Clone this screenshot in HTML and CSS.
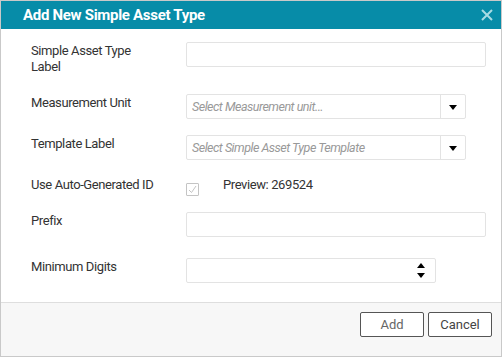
FILE: index.html
```html
<!DOCTYPE html>
<html lang="en">
<head>
    <meta charset="UTF-8">
    <meta name="viewport" content="width=device-width, initial-scale=1.0">
    <title>Add New Simple Asset Type</title>
    <link rel="stylesheet" href="styles.css">
</head>
<body>

<div class="dialog">
    <div class="dialog-header">
        <h1>Add New Simple Asset Type</h1>
        <button class="close" title="Close">
            <svg width="12" height="12" viewBox="0 0 12 12"><path d="M1 1L11 11M11 1L1 11" stroke="currentColor" stroke-width="2"/></svg>
        </button>
    </div>

    <div class="dialog-body">
        <div class="row row-tall">
            <label>Simple Asset Type<br>Label</label>
            <input type="text" class="field">
        </div>
        <div class="row">
            <label>Measurement Unit</label>
            <div class="select">
                <span class="placeholder">Select Measurement unit...</span>
                <span class="select-btn"><span class="caret"></span></span>
            </div>
        </div>
        <div class="row">
            <label>Template Label</label>
            <div class="select">
                <span class="placeholder">Select Simple Asset Type Template</span>
                <span class="select-btn"><span class="caret"></span></span>
            </div>
        </div>
        <div class="row">
            <label>Use Auto-Generated ID</label>
            <div class="auto-id">
                <span class="checkbox">
                    <svg width="11" height="11" viewBox="0 0 11 11"><path d="M2 6L4.5 8.5L9 2" fill="none" stroke="#c4c4c4" stroke-width="1"/></svg>
                </span>
                <span class="preview">Preview: 269524</span>
            </div>
        </div>
        <div class="row row-mid">
            <label>Prefix</label>
            <input type="text" class="field">
        </div>
        <div class="row">
            <label>Minimum Digits</label>
            <div class="number">
                <span class="spin">
                    <span class="up"></span>
                    <span class="down"></span>
                </span>
            </div>
        </div>
    </div>

    <div class="dialog-footer">
        <button class="btn">Add</button>
        <button class="btn btn-dark">Cancel</button>
    </div>
</div>

</body>
</html>
```

FILE: styles.css
```css
body {
    margin: 0;
    font-family: Roboto, "Liberation Sans", sans-serif;
    font-size: 13px;
    letter-spacing: -0.4px;
    color: #333;
}
.dialog {
    width: 502px;
    height: 357px;
    box-sizing: border-box;
    border: 1px solid #c9c9c9;
    display: flex;
    flex-direction: column;
    background: #fff;
}
.dialog-header {
    height: 28px;
    background-color: #078ca8;
    display: flex;
    align-items: center;
    justify-content: space-between;
    padding: 0 8px 0 22px;
}
.dialog-header h1 {
    margin: 0;
    font-size: 15px;
    letter-spacing: -0.3px;
    font-weight: bold;
    color: #fff;
}
.close {
    border: none;
    background: none;
    padding: 0;
    color: #a9dbe4;
    display: flex;
    cursor: pointer;
}
.dialog-body {
    flex-grow: 1;
    padding: 13px 0 0 30px;
    display: flex;
    flex-direction: column;
    gap: 16px;
}
.row {
    display: flex;
    align-items: flex-start;
}
.row-tall { min-height: 36px; }
.row-mid { min-height: 30px; }
.row label {
    width: 155px;
    flex-shrink: 0;
    line-height: 16px;
    padding-top: 1px;
}
.field {
    width: 300px;
    height: 25px;
    box-sizing: border-box;
    border: 1px solid #e3e3e3;
    border-radius: 2px;
    margin: 0;
    font: inherit;
}
.select {
    width: 280px;
    height: 25px;
    box-sizing: border-box;
    border: 1px solid #e3e3e3;
    border-radius: 2px;
    display: flex;
    align-items: center;
}
.placeholder {
    flex-grow: 1;
    padding-left: 5px;
    font-size: 12.5px;
    letter-spacing: -0.5px;
    font-style: italic;
    color: #999;
}
.select-btn {
    width: 24px;
    height: 100%;
    border-left: 1px solid #e3e3e3;
    display: flex;
    align-items: center;
    justify-content: center;
}
.caret {
    width: 0;
    height: 0;
    border-left: 4px solid transparent;
    border-right: 4px solid transparent;
    border-top: 5px solid #000;
    margin-top: 2px;
}
.auto-id {
    display: flex;
    align-items: flex-start;
    gap: 24px;
}
.checkbox {
    width: 13px;
    height: 13px;
    box-sizing: border-box;
    border: 1px solid #c4c4c4;
    border-radius: 1px;
    margin-top: 7px;
    display: flex;
}
.preview {
    line-height: 16px;
    padding-top: 1px;
}
.number {
    width: 250px;
    height: 25px;
    box-sizing: border-box;
    border: 1px solid #e3e3e3;
    border-radius: 2px;
    display: flex;
    justify-content: flex-end;
    align-items: center;
    padding-right: 10px;
}
.spin {
    display: flex;
    flex-direction: column;
    gap: 5px;
}
.up, .down {
    width: 0;
    height: 0;
    border-left: 4px solid transparent;
    border-right: 4px solid transparent;
}
.up { border-bottom: 5px solid #000; }
.down { border-top: 5px solid #000; }
.dialog-footer {
    height: 44px;
    border-top: 1px solid #dedede;
    background-color: #f7f7f7;
    display: flex;
    justify-content: flex-end;
    align-items: flex-start;
    gap: 4px;
    padding: 9px 9px 0 0;
}
.btn {
    width: 64px;
    height: 25px;
    border: 1px solid #555;
    border-radius: 2px;
    background: #fff;
    font-family: inherit;
    font-size: 13px;
    letter-spacing: 0;
    color: #666;
    cursor: pointer;
}
.btn-dark { color: #444; }
```
